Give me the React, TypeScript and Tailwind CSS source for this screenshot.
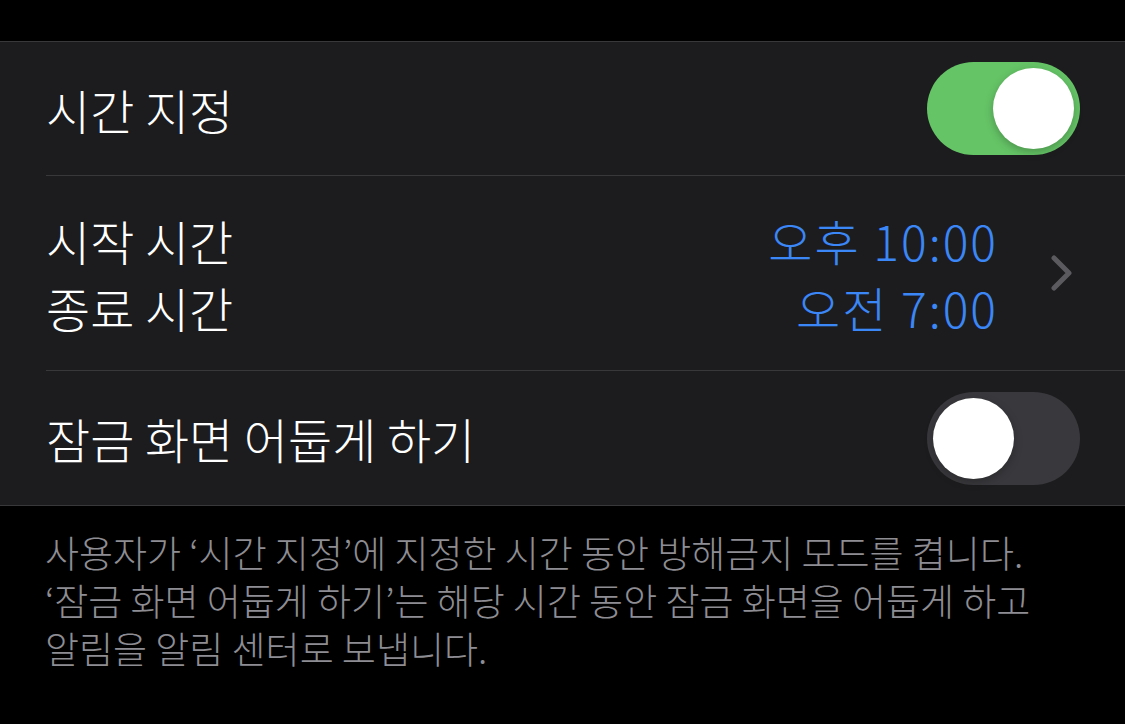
function Toggle({ on }: { on: boolean }) {
  return (
    <div
      className={`flex h-[93px] w-[153px] items-center rounded-full p-[6px] ${
        on ? "justify-end bg-[#65c466]" : "justify-start bg-[#39393d]"
      }`}
    >
      <div className="h-[81px] w-[81px] rounded-full bg-white shadow-[0_3px_8px_rgba(0,0,0,0.25)]" />
    </div>
  );
}

const footerLines = [
  "사용자가 ‘시간 지정’에 지정한 시간 동안 방해금지 모드를 켭니다.",
  "‘잠금 화면 어둡게 하기’는 해당 시간 동안 잠금 화면을 어둡게 하고",
  "알림을 알림 센터로 보냅니다.",
];

export default function App() {
  return (
    <div
      className="h-[724px] w-[1125px] overflow-hidden bg-black text-white"
      style={{ fontFamily: '"Noto Sans CJK KR", "Noto Sans", sans-serif' }}
    >
      <div className="h-[41px]" />
      <div className="border-y border-[#38383a] bg-[#1c1c1e] pl-[46px]">
        <div className="flex h-[134px] items-center justify-between border-b border-[#38383a] pr-[45px]">
          <span className="text-[48px] font-light leading-none">시간 지정</span>
          <Toggle on />
        </div>
        <div className="flex h-[195px] items-center border-b border-[#38383a] pr-[52px]">
          <div className="flex flex-1 flex-col gap-[19px] text-[48px] font-light leading-none">
            <span>시작 시간</span>
            <span>종료 시간</span>
          </div>
          <div className="flex flex-col items-end gap-[19px] text-[48px] font-light leading-none tracking-[2px] text-[#3b87f7]">
            <span>오후 10:00</span>
            <span>오전 7:00</span>
          </div>
          <svg viewBox="0 0 22 36" className="ml-[53px] h-[36px] w-[22px]" fill="none">
            <path
              d="M3 3 L18 18 L3 33"
              stroke="#5b5b5f"
              strokeWidth="5"
              strokeLinecap="round"
              strokeLinejoin="round"
            />
          </svg>
        </div>
        <div className="flex h-[134px] items-center justify-between pr-[45px]">
          <span className="text-[48px] font-light leading-none">잠금 화면 어둡게 하기</span>
          <Toggle on={false} />
        </div>
      </div>
      <div className="flex flex-col gap-[11px] px-[45px] pt-[28px] text-[37px] font-light leading-[37px] text-[#8d8d93]">
        {footerLines.map((line) => (
          <p key={line}>{line}</p>
        ))}
      </div>
    </div>
  );
}
